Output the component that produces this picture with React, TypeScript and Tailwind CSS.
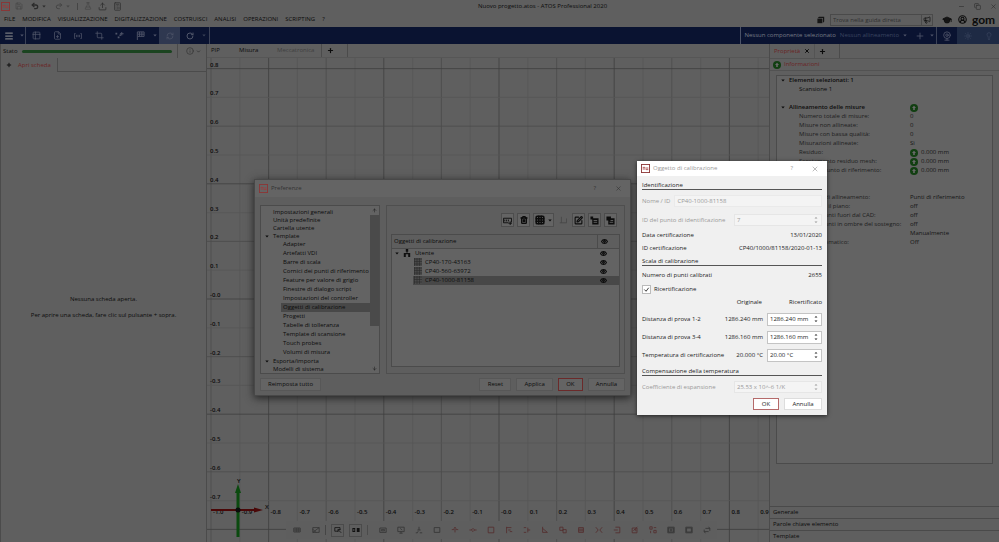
import type { ReactNode } from "react";
import {
  ArrowDown,
  ArrowUp,
  Calculator,
  ChevronDown,
  CircleUserRound,
  Columns2,
  Copy,
  Crop,
  Eye,
  FilePlus,
  FlaskConical,
  GraduationCap,
  Grid3x3,
  Info,
  Lightbulb,
  Megaphone,
  Menu,
  Minus,
  Plus,
  Redo2,
  RefreshCw,
  RotateCw,
  Save,
  SquarePen,
  Sun,
  Table2,
  Trash2,
  Undo2,
  Upload,
  Webcam,
  X,
} from "lucide-react";

const menus = [
  "FILE",
  "MODIFICA",
  "VISUALIZZAZIONE",
  "DIGITALIZZAZIONE",
  "COSTRUISCI",
  "ANALISI",
  "OPERAZIONI",
  "SCRIPTING",
  "?",
];

const templates = [
  "Adapter",
  "Artefatti VDI",
  "Barre di scala",
  "Cornici dei punti di riferimento",
  "Feature per valore di grigio",
  "Finestre di dialogo script",
  "Impostazioni del controller",
  "Oggetti di calibrazione",
  "Progetti",
  "Tabelle di tolleranza",
  "Template di scansione",
  "Touch probes",
  "Volumi di misura",
];

const calibrationObjects = [
  "CP40-170-43163",
  "CP40-560-63972",
  "CP40-1000-81158",
];

const alignment = [
  { label: "Numero totale di misure:", value: "0" },
  { label: "Misure non allineate:", value: "0" },
  { label: "Misure con bassa qualità:", value: "0" },
  { label: "Misurazioni allineate:", value: "Sì" },
  { label: "Residuo:", value: "0.000 mm", ok: true },
  { label: "Scostamento residuo mesh:", value: "0.000 mm", ok: true },
  { label: "Residuo punto di riferimento:", value: "0.000 mm", ok: true },
];

const processing = [
  { label: "Modalità di allineamento:", value: "Punti di riferimento" },
  { label: "Soglia per il piano:", value: "off" },
  { label: "Elimina punti fuori dal CAD:", value: "off" },
  { label: "Elimina punti in ombre del sostegno:", value: "off" },
  { label: "", value: "Manualmente" },
  { label: "Avvio automatico:", value: "Off" },
];

// Outlines of the selection tools, on a 10x10 grid
const grayTools = [
  "M1 2.500h8v5.500H1zM3 4.500h4v1.500H3z",
  "M1 1.500h8v5.500H1zM3 9h4M5 7v2M4 3l2.500 2",
  "M5 1v4M3 5h4M1 8.500h2l1-2M6 8.500h3",
  "M1.500 2h7v6h-7z",
];

const redTools = [
  "M1 4.500h3M6 4.500h3M5 2v6M3.500 3l1.500-1.500L6.500 3",
  "M0.500 5h3M6.500 5h3M5 3l2 2-2 2-2-2z",
  "M1.500 1.500h7v7h-7z",
  "M2 1v8M2 2h6M4 5h3M6 7h3",
  "M1 2h3M1 8h3M6 2v6M6 5h3",
  "M2 1v7h6M2 3l6 5",
  "M1 1.500h4v4H1zM5 4.500h4v4H5z",
  "M2 2h6v6H2zM2 4h6M2 6h6",
  "M1 1.500l3 3.500-3 3.500M9 1.500L6 5l3 3.500",
  "M3 1.500h5.500v7H3M1 5h5",
  "M1.500 2.500h6v6h-6zM3 6l5-5M4 4.500h2v2",
  "M1 1h3v3H1zM6 2h3M2 6v3M6 5.500h3v3H6z",
];

function ToolIcon({ path }: { path: string }) {
  return (
    <svg viewBox="0 0 10 10" className="size-[8px] shrink-0" fill="none" stroke="currentColor">
      <path d={path} />
    </svg>
  );
}

function AppIcon() {
  return (
    <svg viewBox="0 0 10 10" className="size-[9px] shrink-0">
      <rect x="0.5" y="0.5" width="9" height="9" fill="none" stroke="#8c3535" />
      <path d="M2.500 3.500v3M4.200 3.500v3M5.800 3.500v3M7.500 3.500v3M2 3.700h2.500M5.500 6.300h2.500" stroke="#a33a3a" strokeWidth="0.7" />
    </svg>
  );
}

function Caret() {
  return (
    <svg viewBox="0 0 6 4" className="h-[3px] w-[4px] shrink-0">
      <path d="M0.5 0.5h5L3 3.5z" fill="currentColor" />
    </svg>
  );
}

function StatusOk() {
  return (
    <svg viewBox="0 0 10 10" className="size-[8px] shrink-0">
      <circle cx="5" cy="5" r="5" fill="#123f12" />
      <path d="M5 2.200L7.500 5H6v2.500H4V5H2.500z" fill="#6a6a6a" />
    </svg>
  );
}

function TitleBar() {
  return (
    <div className="flex h-3 items-center pr-[2px] pl-px">
      <AppIcon />
      <div className="flex flex-1 items-center text-[#2b2b2b]">
        <Save className="ml-[5px] size-[8px] text-[#454545]" />
        <Undo2 className="ml-[8px] size-[8px]" strokeWidth={4} />
        <span className="ml-[3px]"><Caret /></span>
        <Redo2 className="ml-[9px] size-[8px] text-[#454545]" strokeWidth={3} />
        <span className="ml-[3px] text-[#454545]"><Caret /></span>
        <span className="ml-[7px] h-[7px] w-px bg-[#454545]" />
        <FlaskConical className="ml-[6px] size-[8px] text-[#454545]" />
        <Upload className="ml-[6px] size-[9px]" />
        <Calculator className="ml-[6px] size-[9px] text-[#333]" />
      </div>
      <span className="pl-[78px]">Nuovo progetto.atos - ATOS Professional 2020</span>
      <div className="flex flex-1 items-center justify-end gap-[9px] text-[#2b2b2b]">
        <Minus className="size-[7px]" />
        <Copy className="size-[7px]" />
        <X className="size-[7px]" />
      </div>
    </div>
  );
}

function MenuBar() {
  return (
    <div className="flex h-[15px] items-center pl-1">
      <nav className="flex flex-1 gap-[7px]">
        {menus.map((menu) => (
          <button key={menu}>{menu}</button>
        ))}
      </nav>
      <svg viewBox="0 0 10 10" className="size-[8px]" fill="#151515">
        <path d="M2.500 1H9v6L7.500 8.500V2.500H1z" />
        <path d="M0.500 3.200h6.200V9H0.500z" />
      </svg>
      <label className="ml-[5px] flex h-[12px] w-[103px] items-center border border-[#4a4a4a]">
        <input
          type="text"
          aria-label="Guida"
          placeholder="Trova nella guida diretta"
          className="h-full w-[91px] border-r border-[#4a4a4a] px-[2px] outline-none placeholder:text-[#303030]"
        />
        <Megaphone className="ml-px size-[8px]" />
      </label>
      <GraduationCap className="ml-[9px] size-[10px] fill-[#151515]" />
      <CircleUserRound className="ml-[6px] size-[9px]" strokeWidth={3} />
      <span className="ml-[5px] w-[27px] font-[Lato] text-[12px] leading-[12px] font-bold">gom</span>
    </div>
  );
}

function Toolbar() {
  return (
    <div className="flex h-[17px] items-center bg-[#0a1331] text-[#50566a]">
      <Menu className="ml-[4px] size-[10px] text-[#77797f]" strokeWidth={3} />
      <span className="ml-[6px]"><Caret /></span>
      <span className="ml-[1px] h-full w-px bg-[#3b4257]" />
      <Table2 className="ml-[6px] size-[9px]" />
      <FilePlus className="ml-[12px] size-[9px]" />
      <span className="ml-[12px]"><ToolIcon path="M2 2H0.500v6H2M8 2h1.500v6H8M3 3.500v3M5 3.500v3M7 3.500v3" /></span>
      <Crop className="ml-[13px] size-[9px]" />
      <svg viewBox="0 0 10 10" className="ml-[11px] size-[9px]" fill="currentColor">
        <path d="M0.500 2h2v2h-2zM3 6h2v2H3zM5 4h1.500v1.500H5zM7 1h1v1.500h1.500v1H8V5H7V3.500H5.500v-1H7z" />
      </svg>
      <svg viewBox="0 0 10 10" className="ml-[12px] size-[9px]" fill="none" stroke="currentColor">
        <path d="M1.500 10V1h7.500v5H2M4 1v5M6.500 1v5M2 3.500h7" />
      </svg>
      <span className="ml-[8px]"><Caret /></span>
      <span className="ml-[2px] flex h-full w-[21px] items-center justify-center bg-[#2f3850]">
        <RefreshCw className="size-[8px]" />
      </span>
      <RotateCw className="ml-[6px] size-[8px]" strokeWidth={3} />
      <span className="ml-[8px] text-[#3b4257]"><Caret /></span>
      <span className="ml-[3px] h-full w-px bg-[#3b4257]" />
      <span className="flex-1" />
      <span className="h-full w-px bg-[#4b5267]" />
      <span className="ml-[3px] text-[#777b85]">Nessun componente selezionato</span>
      <span className="ml-[4px] text-[#3b4560]">Nessun allineamento</span>
      <span className="ml-[4px]"><Caret /></span>
      <Plus className="ml-[8px] size-[10px]" />
      <span className="ml-[5px]"><Caret /></span>
      <span className="ml-[2px] h-full w-px bg-[#3b4257]" />
      <Webcam className="mx-[5px] size-[10px]" />
      <span className="flex h-full w-[42px] items-center justify-around bg-[#1e2a44] text-[#3d4760]">
        <Sun className="size-[8px]" />
        <Lightbulb className="size-[8px]" />
      </span>
    </div>
  );
}

function ReportPanel() {
  return (
    <section className="flex w-[207px] shrink-0 flex-col border-x border-[#4b4b4b]">
      <div className="flex h-[14px] items-center pl-[2px]">
        <span className="w-[19px]">Stato</span>
        <span className="h-[3px] flex-1 rounded-full bg-[#1b4420]" />
        <span className="ml-[5px] h-full w-px bg-[#4b4b4b]" />
        <Info className="ml-[8px] size-[8px] text-[#333]" />
        <ChevronDown className="mr-[5px] ml-[2px] size-[5px]" />
      </div>
      <div className="flex h-[14px]">
        <button className="flex w-[57px] items-center gap-[6px] border-r border-[#4b4b4b] pl-[5px] text-[#6b2424]">
          <Plus className="size-[6px] text-[#111]" strokeWidth={4} />
          Apri scheda
        </button>
        <span className="flex-1 border-b border-[#4b4b4b]" />
      </div>
      <div className="flex flex-1 flex-col items-center gap-[7px] pt-[223px]">
        <p>Nessuna scheda aperta.</p>
        <p>Per aprire una scheda, fare clic sul pulsante + sopra.</p>
      </div>
    </section>
  );
}

// Distance in pixels between two grid lines, each worth 0.1
const STEP = 28.8;

const tick = (n: number) => (n > 0 ? (n / 10).toFixed(1) : `-${(-n / 10).toFixed(1)}`);

const gridStroke = (n: number) => (n % 4 === 0 ? "#3f3f3f" : n % 2 === 0 ? "#4b4b4b" : "#575757");

function GridView() {
  const columns = Array.from({ length: 20 }, (_, i) => i - 10);
  const rows = Array.from({ length: 18 }, (_, i) => i - 9);

  return (
    <svg className="absolute inset-0 h-full w-full text-[6px] font-semibold" fill="#0c0c0c">
      {Array.from({ length: 39 }, (_, i) => i - 10).map((n) => (
        <line key={n} x1={292 + n * STEP} x2={292 + n * STEP} y1="0" y2="100%" stroke={gridStroke(n)} strokeWidth="0.8" />
      ))}
      {rows.map((n) => (
        <line key={n} x1="0" x2="100%" y1={241 - n * STEP} y2={241 - n * STEP} stroke={gridStroke(n)} strokeWidth="0.8" />
      ))}
      {rows.filter((n) => n > -8 && n < 9).map((n) => (
        <text key={n} x="3" y={239 - n * STEP}>{tick(n)}</text>
      ))}
      {columns.map((n) => (
        <text key={n} x={294 + n * STEP} y="456">{tick(n)}</text>
      ))}
      <path d="M4 452h43" stroke="#4a0808" strokeWidth="2" />
      <path d="M47 449.500l9 2.500-9 2.500z" fill="#4a0808" />
      <path d="M31 479v-46" stroke="#0b4a0f" strokeWidth="3" />
      <path d="M28 435l3-9 3 9z" fill="#0b4a0f" />
      <circle cx="31" cy="452" r="2.500" />
      <text x="58" y="451">X</text>
      <text x="30" y="425">Y</text>
    </svg>
  );
}

function ViewTools() {
  return (
    <div className="absolute bottom-[3px] left-[79px] flex h-[18px] items-center bg-[#5e5e5e] pr-[6px] pl-[7px] text-[#333]">
      <div className="flex gap-[11px]">
        <ToolIcon path="M1 2.500h8v5H1zM1 5h8M4 2.500v5M6.500 2.500v5" />
        <ToolIcon path="M1 2h8v6H1zM1 8l8-6M1 4l4 4" />
      </div>
      <span className="mx-[5px] h-[10px] w-px bg-[#454545]" />
      <button aria-label="Seleziona" className="flex size-[13px] items-center justify-center border border-[#4b4b4b] text-[#111]">
        <ToolIcon path="M5 6.500H1v-4.500h6.500v3M5 4.500l4 4M5 4.500v3M5 4.500h3" />
      </button>
      <button aria-label="Ritaglia" className="ml-[5px] flex size-[13px] items-center justify-center border border-[#4b4b4b] text-[#111]">
        <svg viewBox="0 0 10 10" className="size-[8px]" fill="currentColor">
          <path d="M0.500 2.500H4v5H0.500zM6 2.500h3.500v5H6zM1.500 4v2H3V4z" fillRule="evenodd" />
        </svg>
      </button>
      <span className="mx-[5px] h-[10px] w-px bg-[#4b4b4b]" />
      <div className="ml-[6px] flex gap-[10px]">
        {grayTools.map((path) => (
          <ToolIcon key={path} path={path} />
        ))}
        <div className="flex gap-[10px] text-[#542c2c]">
          {redTools.map((path) => (
            <ToolIcon key={path} path={path} />
          ))}
        </div>
        <ToolIcon path="M1 1.500h8v7H1zM2 2.500h6v5H2zM4 4h2v2H4z" />
        <ToolIcon path="M1 1.500h8v7H1zM2 2.500h6v5H2z" />
        <ToolIcon path="M3 3h5.500v3M7 7H1.500V4.500M7 1l1.500 2M3 9L1.500 7" />
      </div>
    </div>
  );
}

function Viewport() {
  return (
    <section className="flex min-w-0 flex-1 flex-col">
      <div className="flex h-[14px] items-center border-b border-[#565656] pl-[4px]">
        <button className="w-[28px] text-left">PIP</button>
        <button className="w-[38px] text-left">Misura</button>
        <button className="w-[44px] text-left text-[#404040]">Meccatronica</button>
        <span className="h-full w-px bg-[#4b4b4b]" />
        <Plus className="mx-[5px] size-[7px]" strokeWidth={4} />
        <span className="ml-[8px] h-full w-px bg-[#4b4b4b]" />
      </div>
      <div className="relative flex-1 overflow-hidden">
        <GridView />
        <ViewTools />
      </div>
    </section>
  );
}

function Property({ label, value, ok }: { label: string; value: string; ok?: boolean }) {
  return (
    <div className="flex h-[9px] items-center pl-[22px]">
      <dt className="w-[111px] whitespace-nowrap text-[#202020]">{label}</dt>
      <dd className="flex items-center gap-[3px] whitespace-nowrap text-[#151515]">
        {ok && <StatusOk />}
        {value}
      </dd>
    </div>
  );
}

function PropertyHeading({ children, ok }: { children: ReactNode; ok?: boolean }) {
  return (
    <h3 className="flex h-[9px] items-center pl-[4px] font-semibold">
      <Caret />
      <span className="ml-[4px] w-[121px]">{children}</span>
      {ok && <StatusOk />}
    </h3>
  );
}

function PropertiesPanel() {
  return (
    <section className="flex w-[230px] shrink-0 flex-col border-l border-[#4b4b4b]">
      <div className="flex h-[14px] items-center pl-[4px]">
        <span className="text-[#6b2424]">Proprietà</span>
        <X className="ml-[4px] size-[6px]" strokeWidth={4} />
        <span className="ml-[4px] h-full w-px bg-[#545454]" />
        <Plus className="ml-[4px] size-[7px]" strokeWidth={4} />
        <span className="ml-[13px] h-full w-px bg-[#4b4b4b]" />
      </div>
      <div className="flex h-[13px] items-center gap-[3px] border-y border-[#525252] pl-[3px] text-[#6b2424]">
        <StatusOk />
        Informazioni
      </div>
      <div className="mx-[6px] mt-[4px] h-[389px] border border-[#4b4b4b] bg-[#636363]">
        <PropertyHeading>Elementi selezionati: 1</PropertyHeading>
        <p className="h-[9px] pl-[22px] leading-[9px]">Scansione 1</p>
        <div className="mt-[9px]">
          <PropertyHeading ok>Allineamento delle misure</PropertyHeading>
          <dl>
            {alignment.map((item) => (
              <Property key={item.label} {...item} />
            ))}
          </dl>
        </div>
        <div className="mt-[9px]">
          <PropertyHeading>Elaborazione</PropertyHeading>
          <dl>
            {processing.map((item) => (
              <Property key={item.label} {...item} />
            ))}
          </dl>
        </div>
      </div>
      <div className="mt-auto">
        {["Generale", "Parole chiave elemento", "Template"].map((title) => (
          <button key={title} className="block h-[12px] w-full border-t border-[#4a4a4a] pl-[3px] text-left">
            {title}
          </button>
        ))}
      </div>
    </section>
  );
}

function DarkButton({ children, primary }: { children: ReactNode; primary?: boolean }) {
  return (
    <button
      className={
        primary
          ? "h-[13px] w-[25px] border border-[#6b2a2a] bg-[#646464]"
          : "h-[13px] min-w-[32px] border border-[#575757] bg-[#646464] px-[7px]"
      }
    >
      {children}
    </button>
  );
}

function IconButton({ label, children }: { label: string; children: ReactNode }) {
  return (
    <button
      aria-label={label}
      className="flex h-[14px] min-w-[13px] items-center justify-center gap-[3px] border border-[#4d4d4d] bg-[#646464] px-px"
    >
      {children}
    </button>
  );
}

function TreeItem({ children, caret }: { children: ReactNode; caret?: boolean }) {
  return (
    <li className="flex h-[8px] items-center pl-[4px]">
      <span className="w-[8px]">{caret && <Caret />}</span>
      {children}
    </li>
  );
}

function PreferencesDialog() {
  return (
    <div
      role="dialog"
      aria-label="Preferenze"
      className="absolute top-[179px] left-[254px] w-[377px] border border-[#484848] bg-[#5e5e5e] shadow-[0_2px_8px_#222]"
    >
      <div className="flex h-[17px] items-center bg-[#646464] px-[4px] text-[#333]">
        <AppIcon />
        <span className="ml-[3px] flex-1">Preferenze</span>
        <span className="mr-[19px]">?</span>
        <X className="mr-[4px] size-[7px]" />
      </div>
      <div className="flex gap-[6px] px-[5px] pt-[8px]">
        <div className="flex h-[169px] w-[120px] overflow-hidden border border-[#4b4b4b] bg-[#636363]">
          <ul className="flex-1 pt-[2px] whitespace-nowrap">
            <TreeItem>Impostazioni generali</TreeItem>
            <TreeItem>Unità predefinite</TreeItem>
            <TreeItem>Cartella utente</TreeItem>
            <TreeItem caret>Template</TreeItem>
            {templates.map((name) => (
              <li
                key={name}
                className={
                  name === "Oggetti di calibrazione"
                    ? "ml-[20px] h-[9px] bg-[#484848] pl-[2px] leading-[9px]"
                    : "ml-[20px] h-[9px] pl-[2px] leading-[9px]"
                }
              >
                {name}
              </li>
            ))}
            <TreeItem caret>Esporta/importa</TreeItem>
            <TreeItem>Modelli di sistema</TreeItem>
          </ul>
          <div className="flex w-[9px] shrink-0 flex-col items-center">
            <ArrowUp className="size-[9px] p-[2px]" />
            <span className="h-[111px] w-full bg-[#4a4a4a]" />
            <ArrowDown className="mt-auto size-[9px] p-[2px]" />
          </div>
        </div>
        <div className="flex-1 border border-[#4f4f4f] px-[4px] pt-[7px] pb-[5px]">
          <div className="flex items-center justify-end gap-[3px] pr-[3px]">
            <IconButton label="Nuovo">
              <svg viewBox="0 0 10 10" className="size-[9px]" fill="none" stroke="currentColor">
                <path d="M6 7.500H0.500v-5h9V7M2 4v2M4 4v2M6 4v2M8 6v4M6 8h4" />
              </svg>
            </IconButton>
            <IconButton label="Elimina"><Trash2 className="size-[8px]" strokeWidth={4} /></IconButton>
            <IconButton label="Griglia">
              <Grid3x3 className="size-[10px]" strokeWidth={4} />
              <Caret />
            </IconButton>
            <span className="mx-[2px] text-[#454545]"><ToolIcon path="M3 1v7.500h6.500V3M1 8.500h2" /></span>
            <IconButton label="Modifica"><SquarePen className="size-[9px]" strokeWidth={3} /></IconButton>
            <IconButton label="Importa">
              <svg viewBox="0 0 10 10" className="size-[9px]" fill="currentColor">
                <path d="M0.500 0.500l3 0v2h6V9.500h-7V4h-2z" />
                <path d="M4 5h4M4 7h4" stroke="#646464" />
              </svg>
            </IconButton>
            <IconButton label="Esporta">
              <svg viewBox="0 0 10 10" className="size-[9px]" fill="currentColor">
                <path d="M0.500 0.500h5v2h4v7h-7V5h-2z" />
                <path d="M5 5h3M4 7h4" stroke="#646464" />
              </svg>
            </IconButton>
          </div>
          <div className="mt-[7px] h-[133px] border border-[#4b4b4b] bg-[#636363]">
            <table className="w-full border-collapse">
              <thead>
                <tr className="h-[13px] border-b border-[#4b4b4b] bg-[#5e5e5e] text-left">
                  <th className="p-0 pl-[2px] font-normal">Oggetti di calibrazione</th>
                  <th className="w-[22px] border-l border-[#4b4b4b] p-0"><Eye className="ml-[3px] size-[7px]" strokeWidth={4} /></th>
                </tr>
              </thead>
              <tbody>
                <tr className="h-[9px]">
                  <td className="p-0 pl-[3px]">
                    <span className="flex h-[9px] items-center gap-[4px]">
                      <Caret />
                      <svg viewBox="0 0 10 10" className="size-[8px]" fill="#111">
                        <path d="M3.500 0h3v3.500h-1V5H9v5H6.500V6.500h-3V10H1V5h3.500V3.500h-1z" />
                      </svg>
                      Utente
                    </span>
                  </td>
                  <td className="p-0"><Eye className="ml-[3px] size-[7px]" strokeWidth={4} /></td>
                </tr>
                {calibrationObjects.map((name) => (
                  <tr key={name} className="h-[9px]">
                    <td className="p-0 pl-[21px]">
                      <span
                        className={
                          name === "CP40-1000-81158"
                            ? "flex h-[9px] items-center gap-[3px] bg-[#484848] pl-px"
                            : "flex h-[9px] items-center gap-[3px] pl-px"
                        }
                      >
                        <svg viewBox="0 0 8 8" className="size-[8px]">
                          <path d="M0 0h8v8H0z" fill="#4a4a4a" />
                          <path d="M0.500 0v8M3 0v8M5.500 0v8M0 1h8M0 3.500h8M0 6h8" stroke="#2a2a2a" strokeWidth="0.6" />
                        </svg>
                        {name}
                      </span>
                    </td>
                    <td className={name === "CP40-1000-81158" ? "bg-[#484848] p-0" : "p-0"}>
                      <Eye className="ml-[3px] size-[7px]" strokeWidth={4} />
                    </td>
                  </tr>
                ))}
              </tbody>
            </table>
          </div>
        </div>
      </div>
      <div className="flex gap-[5px] px-[5px] pt-[4px] pb-[4px]">
        <DarkButton>Reimposta tutto</DarkButton>
        <span className="flex-1" />
        <DarkButton>Reset</DarkButton>
        <DarkButton>Applica</DarkButton>
        <DarkButton primary>OK</DarkButton>
        <DarkButton>Annulla</DarkButton>
      </div>
    </div>
  );
}

function Heading({ children }: { children: ReactNode }) {
  return (
    <h3 className="flex h-[12px] items-end border-b border-[#555] leading-[8px]">{children}</h3>
  );
}

function Spinner({ id, value, disabled }: { id: string; value: string; disabled?: boolean }) {
  return (
    <span
      className={
        disabled
          ? "flex h-[12px] w-[88px] items-center border border-[#e6e6e6] bg-[#f4f4f4] pr-[3px] text-[#999]"
          : "flex h-[13px] w-[55px] items-center border border-[#c4c4c4] bg-white pr-[3px]"
      }
    >
      <input id={id} type="text" defaultValue={value} disabled={disabled} className="min-w-0 flex-1 pl-[2px] outline-none" />
      <svg viewBox="0 0 4 8" className="h-[8px] w-[4px]" fill="currentColor">
        <path d="M0.500 2.500L2 1l1.500 1.500zM0.500 5.500L2 7l1.500-1.500z" />
      </svg>
    </span>
  );
}

function Recertified({ id, label, original, value }: { id: string; label: string; original: string; value: string }) {
  return (
    <div className="flex h-[18px] items-center">
      <label htmlFor={id} className="flex-1">{label}</label>
      <span className="mr-[4px]">{original}</span>
      <Spinner id={id} value={value} />
    </div>
  );
}

function CalibrationDialog() {
  return (
    <div
      role="dialog"
      aria-label="Oggetto di calibrazione"
      className="absolute top-[161px] left-[637px] w-[190px] bg-[#f0f0f0] text-[#222] shadow-[0_1px_4px_#222]"
    >
      <div className="flex h-[15px] items-center bg-white px-[4px] text-[#999]">
        <AppIcon />
        <span className="ml-[3px] flex-1">Oggetto di calibrazione</span>
        <span className="mr-[18px]">?</span>
        <X className="mr-[4px] size-[8px]" strokeWidth={2} />
      </div>
      <div className="px-[5px] pt-[2px] pb-[5px]">
        <Heading>Identificazione</Heading>
        <div className="flex h-[22px] items-center gap-[4px] text-[#999]">
          <label htmlFor="name">Nome / ID</label>
          <input
            id="name"
            type="text"
            disabled
            defaultValue="CP40-1000-81158"
            className="h-[12px] min-w-0 flex-1 border border-[#eaeaea] bg-[#f4f4f4] pl-[2px]"
          />
        </div>
        <div className="flex h-[16px] items-center justify-between text-[#999]">
          <label htmlFor="point">ID del punto di identificazione</label>
          <Spinner id="point" value="7" disabled />
        </div>
        <div className="flex h-[15px] items-center justify-between">
          <span>Data certificazione</span>
          <span>13/01/2020</span>
        </div>
        <div className="flex h-[11px] items-center justify-between">
          <span>ID certificazione</span>
          <span>CP40/1000/81158/2020-01-13</span>
        </div>
        <Heading>Scala di calibrazione</Heading>
        <div className="flex h-[18px] items-center justify-between">
          <span>Numero di punti calibrati</span>
          <span>2655</span>
        </div>
        <label className="flex h-[10px] items-center gap-[3px]">
          <span className="grid size-[9px] place-items-center border border-[#bbb] bg-white">
            <input type="checkbox" defaultChecked className="peer col-start-1 row-start-1 size-full appearance-none" />
            <svg
              viewBox="0 0 8 8"
              className="pointer-events-none invisible col-start-1 row-start-1 size-[7px] peer-checked:visible"
              fill="none"
              stroke="#222"
            >
              <path d="M1.500 4l2 2 3-4" />
            </svg>
          </span>
          Ricertificazione
        </label>
        <div className="flex h-[16px] items-center justify-end gap-[27px]">
          <span>Originale</span>
          <span>Ricertificato</span>
        </div>
        <Recertified id="d12" label="Distanza di prova 1-2" original="1286.240 mm" value="1286.240 mm" />
        <Recertified id="d34" label="Distanza di prova 3-4" original="1286.160 mm" value="1286.160 mm" />
        <Recertified id="temp" label="Temperatura di certificazione" original="20.000 °C" value="20.00 °C" />
        <Heading>Compensazione della temperatura</Heading>
        <div className="flex h-[22px] items-center justify-between text-[#999]">
          <label htmlFor="expansion">Coefficiente di espansione</label>
          <Spinner id="expansion" value="25.53 x 10^-6 1/K" disabled />
        </div>
        <div className="flex justify-end gap-[5px]">
          <button className="h-[12px] w-[26px] border border-[#b56a6a] bg-white">OK</button>
          <button className="h-[12px] w-[38px] border border-[#ddd] bg-white">Annulla</button>
        </div>
      </div>
    </div>
  );
}

function App() {
  return (
    <div className="relative flex min-h-screen flex-col bg-[#5f5f5f] font-['Open_Sans',sans-serif] text-[6px] leading-[9px] text-[#0c0c0c]">
      <TitleBar />
      <MenuBar />
      <Toolbar />
      <main className="flex flex-1">
        <ReportPanel />
        <Viewport />
        <PropertiesPanel />
      </main>
      <PreferencesDialog />
      <CalibrationDialog />
    </div>
  );
}

export default App;
